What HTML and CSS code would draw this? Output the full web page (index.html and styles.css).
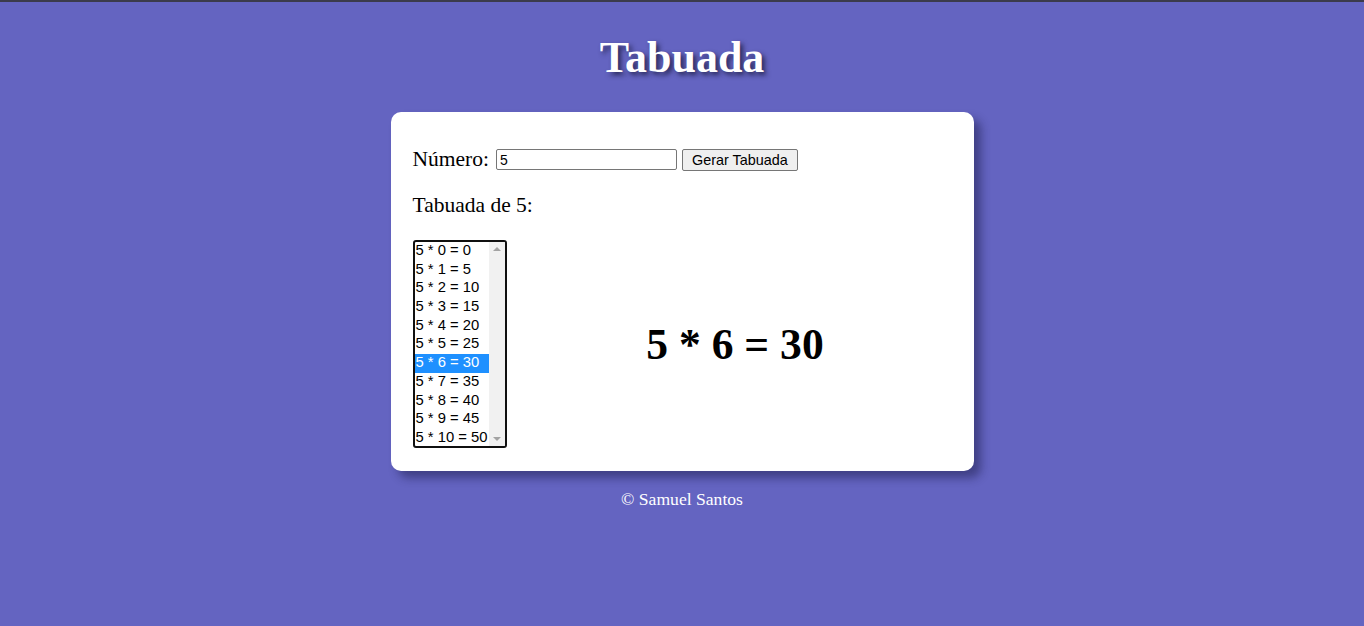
FILE: index.html
```html
<!DOCTYPE html>
<html lang="pt">
<head>
<meta charset="utf-8">
<title>Tabuada</title>
<link rel="stylesheet" href="styles.css">
</head>
<body>
<h1 class="title">Tabuada</h1>
<main class="card">
  <div class="form-row">
    <label class="label" for="num">Número:</label>
    <input class="num-input" id="num" type="text" value="5">
    <button class="gen-btn" type="button">Gerar Tabuada</button>
  </div>
  <p class="subtitle">Tabuada de 5:</p>
  <div class="result-area">
    <div class="listbox">
      <div class="list">
        <div class="opt">5 * 0 = 0</div>
        <div class="opt">5 * 1 = 5</div>
        <div class="opt">5 * 2 = 10</div>
        <div class="opt">5 * 3 = 15</div>
        <div class="opt">5 * 4 = 20</div>
        <div class="opt">5 * 5 = 25</div>
        <div class="opt selected">5 * 6 = 30</div>
        <div class="opt">5 * 7 = 35</div>
        <div class="opt">5 * 8 = 40</div>
        <div class="opt">5 * 9 = 45</div>
        <div class="opt">5 * 10 = 50</div>
      </div>
      <div class="scrollbar">
        <span class="arrow up"></span>
        <span class="arrow down"></span>
      </div>
    </div>
    <div class="result">5 * 6 = 30</div>
  </div>
</main>
<footer class="footer">© Samuel Santos</footer>
</body>
</html>
```

FILE: styles.css
```css
html, body {
  margin: 0;
  padding: 0;
}
body {
  background: #6464c1;
  border-top: 2px solid #3b3b4c;
  min-height: 624px;
  font-family: "Liberation Serif", "Times New Roman", serif;
  color: #000;
}
.title {
  margin: 30px 0 29px;
  text-align: center;
  color: #fff;
  font-size: 44px;
  font-weight: bold;
  line-height: normal;
  text-shadow: 3px 3px 5px rgba(30, 30, 70, 0.85);
}
.card {
  box-sizing: border-box;
  width: 583px;
  margin: 0 auto;
  background: #fff;
  border-radius: 10px;
  padding: 35px 22px 23px 22px;
  box-shadow: 7px 7px 10px rgba(20, 20, 60, 0.45);
}
.form-row {
  display: flex;
  align-items: center;
  height: 25px;
}
.label {
  font-size: 21.5px;
  margin-right: 7px;
}
.num-input {
  box-sizing: border-box;
  width: 181px;
  height: 21px;
  border: 1px solid #767676;
  border-radius: 2px;
  padding: 1px 3px;
  font-family: "Liberation Sans", Arial, sans-serif;
  font-size: 14px;
  color: #000;
  background: #fff;
  margin: 0 5px 0 0;
}
.gen-btn {
  box-sizing: border-box;
  width: 116px;
  height: 22px;
  border: 1px solid #767676;
  border-radius: 2px;
  background: #efefef;
  font-family: "Liberation Sans", Arial, sans-serif;
  font-size: 14.4px;
  color: #000;
  padding: 0;
  margin: 0;
}
.subtitle {
  margin: 21px 0 22px;
  font-size: 21.5px;
  line-height: 25px;
}
.result-area {
  display: flex;
  align-items: center;
}
.listbox {
  box-sizing: border-box;
  width: 94px;
  height: 208px;
  border: 2px solid #101010;
  border-radius: 3px;
  display: flex;
  overflow: hidden;
  flex: none;
}
.list {
  width: 74px;
  font-family: "Liberation Sans", Arial, sans-serif;
  font-size: 14.8px;
}
.opt {
  height: 18.7px;
  line-height: 16px;
  padding-left: 1px;
  white-space: nowrap;
  color: #000;
}
.opt.selected {
  background: #1e90ff;
  color: #fff;
}
.scrollbar {
  width: 16px;
  background: #f1f1f1;
  display: flex;
  flex-direction: column;
  justify-content: space-between;
  align-items: center;
  padding: 5px 0;
  box-sizing: border-box;
}
.arrow {
  width: 0;
  height: 0;
  border-left: 4px solid transparent;
  border-right: 4px solid transparent;
}
.arrow.up {
  border-bottom: 4px solid #a3a3a3;
}
.arrow.down {
  border-top: 4px solid #a3a3a3;
}
.result {
  flex: 1;
  text-align: center;
  padding-left: 12px;
  font-size: 43.6px;
  font-weight: bold;
}
.footer {
  margin-top: 18px;
  text-align: center;
  color: #fff;
  font-size: 17.6px;
}
```
